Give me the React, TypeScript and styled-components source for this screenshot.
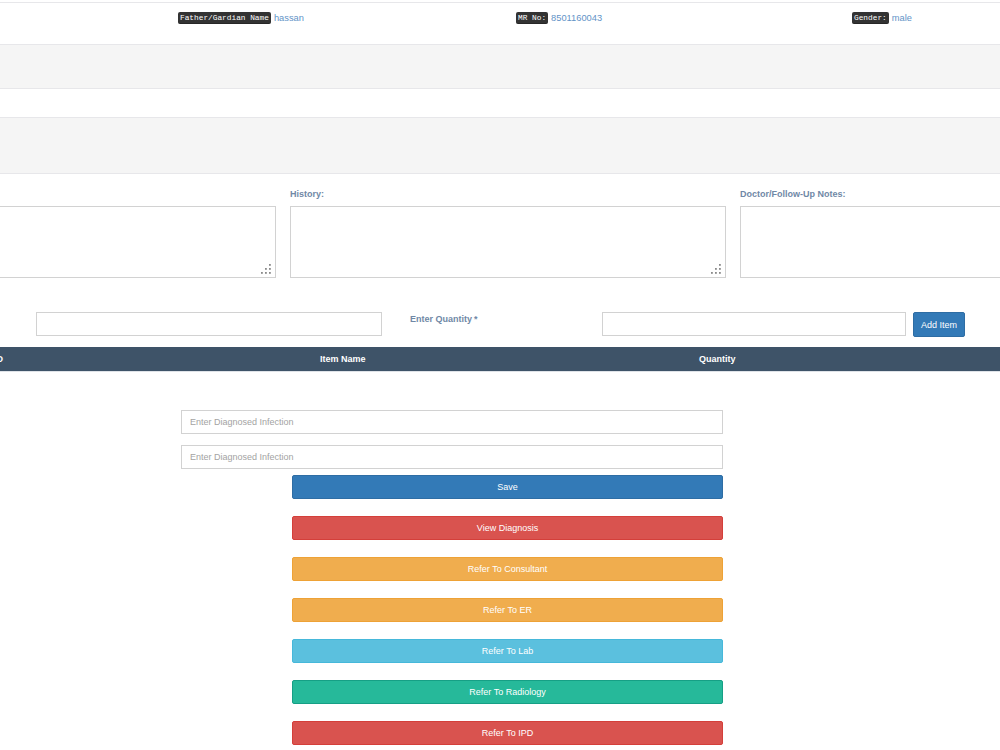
import styled, { createGlobalStyle } from "styled-components";

const GlobalStyle = createGlobalStyle`
  html, body {
    margin: 0;
    padding: 0;
    background: #fff;
    overflow: hidden;
  }
  body {
    font-family: "Liberation Sans", Arial, sans-serif;
    font-size: 9px;
    color: #73879c;
  }
  * { box-sizing: border-box; }
`;

// the page is scrolled sideways, so the left part is off screen
const Page = styled.div`
  width: 1336px;
  margin-left: -160px;
  padding-top: 2px;
`;

const InfoTable = styled.div`
  border-bottom: 1px solid #e7e7ea;
`;

const InfoRow = styled.div<{ $height: number; $striped?: boolean }>`
  display: grid;
  grid-template-columns: 338px 338px 336px 1fr;
  height: ${(p) => p.$height + 1}px;
  padding-top: 9px;
  border-top: 1px solid #e7e7ea;
  background: ${(p) => (p.$striped ? "#f5f5f5" : "#fff")};
`;

const InfoCell = styled.div`
  display: flex;
  align-items: center;
  gap: 3px;
  height: 12px;
`;

const Kbd = styled.span`
  display: inline-block;
  height: 12px;
  line-height: 12px;
  padding: 0 2px;
  font-family: "Liberation Mono", "Courier New", monospace;
  font-size: 7.8px;
  color: #fff;
  background: #333;
  border-radius: 2px;
  box-shadow: inset 0 -1px 0 rgba(0, 0, 0, 0.25);
`;

const Value = styled.span`
  color: #6393c7;
  font-size: 9.3px;
`;

const NotesGrid = styled.div`
  display: grid;
  grid-template-columns: repeat(3, 436px);
  gap: 14px;
  padding-top: 14px;
`;

const Field = styled.div`
  display: flex;
  flex-direction: column;
`;

const Label = styled.label`
  display: block;
  height: 12px;
  line-height: 12px;
  margin-bottom: 6px;
  font-weight: bold;
  font-size: 9px;
  color: #7088a6;
`;

const AreaBox = styled.div`
  position: relative;
  height: 72px;
`;

const TextArea = styled.textarea`
  display: block;
  width: 100%;
  height: 72px;
  border: 1px solid #d2d2d2;
  resize: none;
  outline: none;
  font-family: inherit;
`;

const Grip = styled.svg`
  position: absolute;
  right: 5px;
  bottom: 4px;
`;

const ItemRow = styled.div`
  display: flex;
  align-items: flex-start;
  margin-top: 34px;
  height: 24px;
`;

const InlineLabel = styled.div<{ $width: number }>`
  width: ${(p) => p.$width}px;
  padding: 2px 0 0 28px;
  font-weight: bold;
  font-size: 9px;
  color: #7088a6;
  span { margin-left: 2px; }
`;

const TextInput = styled.input<{ $width: number }>`
  width: ${(p) => p.$width}px;
  height: 24px;
  border: 1px solid #d2d2d2;
  padding: 0 8px;
  font-family: inherit;
  font-size: 9px;
  outline: none;
  &::placeholder { color: #a3a3a3; }
`;

const SmallButton = styled.button`
  width: 52px;
  height: 25px;
  margin-left: 7px;
  border: 1px solid #2e6da4;
  border-radius: 2px;
  background: #337ab7;
  color: #fff;
  font-family: inherit;
  font-size: 9px;
`;

const TableHead = styled.div`
  display: grid;
  grid-template-columns: 146px 326px 379px 1fr;
  margin-top: 11px;
  height: 25px;
  background: #3e5368;
  border-bottom: 1px solid #dfe3e8;
`;

const HeadCell = styled.div`
  padding-left: 8px;
  line-height: 24px;
  font-weight: bold;
  font-size: 9px;
  color: #fff;
`;

const DiagForm = styled.div`
  width: 542px;
  margin: 38px 0 0 341px;
  display: flex;
  flex-direction: column;
  gap: 11px;
`;

const Actions = styled.div`
  width: 431px;
  margin: 6px 0 0 452px;
  display: flex;
  flex-direction: column;
  gap: 17px;
`;

const palette = {
  primary: ["#337ab7", "#2e6da4"],
  danger: ["#d9534f", "#d43f3a"],
  warning: ["#f0ad4e", "#eea236"],
  info: ["#5bc0de", "#46b8da"],
  success: ["#26b99a", "#169f85"],
};

type Tone = keyof typeof palette;

const ActionButton = styled.button<{ $tone: Tone }>`
  height: 24px;
  width: 100%;
  border: 1px solid ${(p) => palette[p.$tone][1]};
  border-radius: 2px;
  background: ${(p) => palette[p.$tone][0]};
  color: #fff;
  font-family: inherit;
  font-size: 9px;
`;

// first column is scrolled out of view, so its cell stays empty
const info = [
  { height: 41, cells: [["", ""], ["Father/Gardian Name", "hassan"], ["MR No:", "8501160043"], ["Gender:", "male"]] },
  { height: 43, striped: true, cells: [] },
  { height: 28, cells: [] },
  { height: 55, striped: true, cells: [] },
];

const actions: [string, Tone][] = [
  ["Save", "primary"],
  ["View Diagnosis", "danger"],
  ["Refer To Consultant", "warning"],
  ["Refer To ER", "warning"],
  ["Refer To Lab", "info"],
  ["Refer To Radiology", "success"],
  ["Refer To IPD", "danger"],
];

const GripDots = () => (
  <Grip width="10" height="10" viewBox="0 0 10 10">
    {[[8, 0], [4, 4], [8, 4], [0, 8], [4, 8], [8, 8]].map(([x, y]) => (
      <rect key={`${x}-${y}`} x={x} y={y} width="1.8" height="1.8" fill="#8a8a8a" />
    ))}
  </Grip>
);

const App = () => {
  return (
    <>
      <GlobalStyle />
      <Page>
        <InfoTable>
          {info.map((row, i) => (
            <InfoRow key={i} $height={row.height} $striped={row.striped}>
              {row.cells.map(([k, v], j) => (
                <InfoCell key={j}>
                  {k && <Kbd>{k}</Kbd>}
                  {v && <Value>{v}</Value>}
                </InfoCell>
              ))}
            </InfoRow>
          ))}
        </InfoTable>

        <NotesGrid>
          {["", "History:", "Doctor/Follow-Up Notes:"].map((l, i) => (
            <Field key={i}>
              <Label>{l}</Label>
              <AreaBox>
                <TextArea />
                <GripDots />
              </AreaBox>
            </Field>
          ))}
        </NotesGrid>

        <ItemRow>
          <InlineLabel $width={196} />
          <TextInput $width={346} />
          <InlineLabel $width={220}>Enter Quantity<span>*</span></InlineLabel>
          <TextInput $width={304} />
          <SmallButton>Add Item</SmallButton>
        </ItemRow>

        <TableHead>
          <HeadCell />
          <HeadCell>ID</HeadCell>
          <HeadCell>Item Name</HeadCell>
          <HeadCell>Quantity</HeadCell>
        </TableHead>

        <DiagForm>
          <TextInput $width={542} placeholder="Enter Diagnosed Infection" />
          <TextInput $width={542} placeholder="Enter Diagnosed Infection" />
        </DiagForm>

        <Actions>
          {actions.map(([label, tone]) => (
            <ActionButton key={label} $tone={tone}>
              {label}
            </ActionButton>
          ))}
        </Actions>
      </Page>
    </>
  );
};

export default App;
